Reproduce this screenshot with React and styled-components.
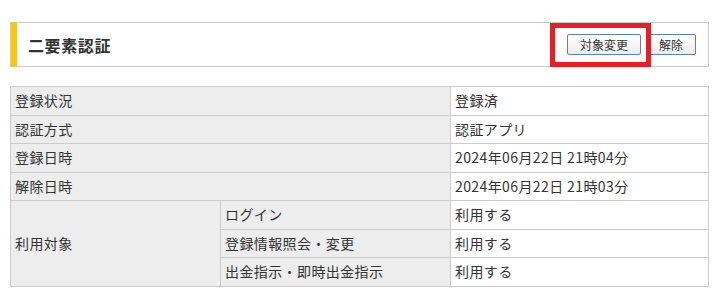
import styled, { createGlobalStyle } from "styled-components";

const GlobalStyle = createGlobalStyle`
  html, body {
    margin: 0;
    padding: 0;
    background: #fff;
  }
  body {
    font-family: "Noto Sans CJK JP", "Noto Sans", sans-serif;
    color: #333;
  }
`;

const Page = styled.div`
  width: 699px;
  padding: 22px 9px 0 10px;
`;

const SectionHeader = styled.div`
  display: flex;
  justify-content: space-between;
  align-items: center;
  height: 43px;
  padding: 0 12px 0 11px;
  margin-left: 1px;
  background: #fff;
  border: 1px solid #ccc;
  border-left: 6px solid #fac700;
  position: relative;
  &::before {
    /* thin grey edge outside the yellow bar */
    content: "";
    position: absolute;
    left: -7px;
    top: -1px;
    bottom: -1px;
    width: 1px;
    background: #ccc;
  }
`;

const Title = styled.h2`
  margin: 0;
  font-size: 16px;
  font-weight: 700;
  color: #333;
  letter-spacing: 0.6px;
`;

const Actions = styled.div`
  display: flex;
  align-items: center;
  gap: 5px;
`;

const HighlightWrap = styled.div`
  position: relative;
  display: flex;
`;

// red annotation frame drawn over the button
const Highlight = styled.span`
  position: absolute;
  top: -11px;
  left: -17px;
  right: -10px;
  bottom: -12px;
  border: 5px solid #e91d25;
  pointer-events: none;
  z-index: 2;
`;

const Button = styled.button`
  height: 21px;
  padding: 0 12px;
  font-family: inherit;
  font-size: 12px;
  line-height: 19px;
  color: #333;
  background: linear-gradient(#ffffff, #ececec);
  border: 1px solid #5a82b8;
  border-radius: 2px;
  cursor: pointer;
`;

const InfoTable = styled.table`
  width: 699px;
  margin-top: 19px;
  border-collapse: collapse;
  table-layout: fixed;
  font-size: 14px;
  letter-spacing: 0.4px;
`;

const Cell = styled.td`
  border: 1px solid #ccc;
  padding: 4px 4px;
  line-height: 19.5px;
  text-align: left;
  vertical-align: middle;
  white-space: nowrap;
  font-weight: 400;
  background: ${(p) => (p.$head ? "#ededed" : "#fff")};
  color: #333;
`;

const rows = [
  ["登録状況", "登録済"],
  ["認証方式", "認証アプリ"],
  ["登録日時", "2024年06月22日 21時04分"],
  ["解除日時", "2024年06月22日 21時03分"],
];

const targets = [
  ["ログイン", "利用する"],
  ["登録情報照会・変更", "利用する"],
  ["出金指示・即時出金指示", "利用する"],
];

export default function App() {
  return (
    <>
      <GlobalStyle />
      <Page>
        <SectionHeader>
          <Title>二要素認証</Title>
          <Actions>
            <HighlightWrap>
              <Highlight />
              <Button>対象変更</Button>
            </HighlightWrap>
            <Button>解除</Button>
          </Actions>
        </SectionHeader>

        <InfoTable>
          <colgroup>
            <col style={{ width: 210 }} />
            <col style={{ width: 230 }} />
            <col />
          </colgroup>
          <tbody>
            {rows.map(([label, value]) => (
              <tr key={label}>
                <Cell as="th" $head colSpan={2}>
                  {label}
                </Cell>
                <Cell>{value}</Cell>
              </tr>
            ))}
            {targets.map(([label, value], i) => (
              <tr key={label}>
                {i === 0 && (
                  <Cell as="th" $head rowSpan={3}>
                    利用対象
                  </Cell>
                )}
                <Cell as="th" $head>
                  {label}
                </Cell>
                <Cell>{value}</Cell>
              </tr>
            ))}
          </tbody>
        </InfoTable>
      </Page>
    </>
  );
}
